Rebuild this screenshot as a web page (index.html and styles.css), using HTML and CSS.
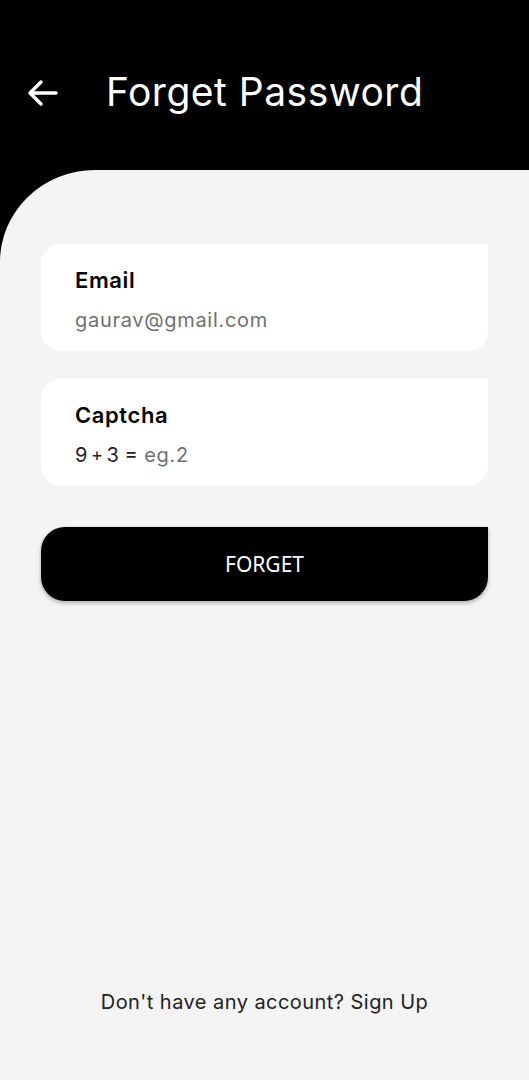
FILE: index.html
```html
<!DOCTYPE html>
<html>
<head>
    <title>Forget Password</title>
    <link rel="stylesheet" href="styles.css">
</head>
<body>
    <div class="screen">
        <header class="topbar">
            <svg class="back" width="32" height="28" viewBox="0 0 32 28">
                <path d="M30 14H4M15 3L4 14l11 11" fill="none" stroke="#fff" stroke-width="3.4" stroke-linecap="round" stroke-linejoin="round"/>
            </svg>
            <h1 class="title">Forget Password</h1>
        </header>
        <main class="panel">
            <div class="field">
                <label class="field-label">Email</label>
                <div class="field-value placeholder">gaurav@gmail.com</div>
            </div>
            <div class="field">
                <label class="field-label">Captcha</label>
                <div class="field-value"><span class="sum">9&thinsp;<span class="plus">+</span>&thinsp;3 =</span> <span class="placeholder">eg.2</span></div>
            </div>
            <button class="submit">FORGET</button>
            <div class="spacer"></div>
            <p class="signup">Don't have any account? Sign Up</p>
        </main>
    </div>
</body>
</html>
```

FILE: styles.css
```css
body {
    margin: 0;
    background-color: #000;
    font-family: Inter, Lato, sans-serif;
}
.screen {
    width: 529px;
    height: 1080px;
    display: flex;
    flex-direction: column;
    background-color: #000;
}
.topbar {
    height: 170px;
    display: flex;
    align-items: flex-start;
    padding-top: 67px;
    box-sizing: border-box;
}
.back {
    margin-left: 26px;
    margin-top: 12px;
}
.title {
    margin: 0 0 0 48px;
    color: #fff;
    font-size: 39px;
    font-weight: 400;
    line-height: 50px;
    letter-spacing: 0.5px;
}
.panel {
    flex: 1;
    background-color: #f4f4f4;
    border-top-left-radius: 95px 92px;
    padding: 74px 41px 0 41px;
    display: flex;
    flex-direction: column;
}
.field {
    background-color: #fff;
    height: 107px;
    box-sizing: border-box;
    border-radius: 20px 0 20px 20px;
    padding: 22px 34px 0 34px;
    margin-bottom: 28px;
}
.field-label {
    display: block;
    font-size: 22px;
    font-weight: 600;
    color: #000;
    line-height: 29px;
    letter-spacing: 0.6px;
}
.field-value {
    margin-top: 12px;
    font-size: 20px;
    line-height: 26px;
    letter-spacing: 0.7px;
}
.placeholder {
    color: #707070;
}
.sum {
    color: #222;
    letter-spacing: 0;
}
.plus {
    font-size: 18px;
    vertical-align: 1px;
}
.submit {
    margin-top: 13px;
    height: 74px;
    border: none;
    border-radius: 24px 0 24px 24px;
    background-color: #000;
    color: #fff;
    font-family: "Noto Sans", sans-serif;
    font-size: 21px;
    box-shadow: 0 2px 4px rgba(0, 0, 0, 0.3);
}
.spacer {
    flex: 1;
}
.signup {
    margin: 0 0 66px 0;
    text-align: center;
    font-size: 20px;
    color: #222;
    letter-spacing: 0.45px;
}
```
